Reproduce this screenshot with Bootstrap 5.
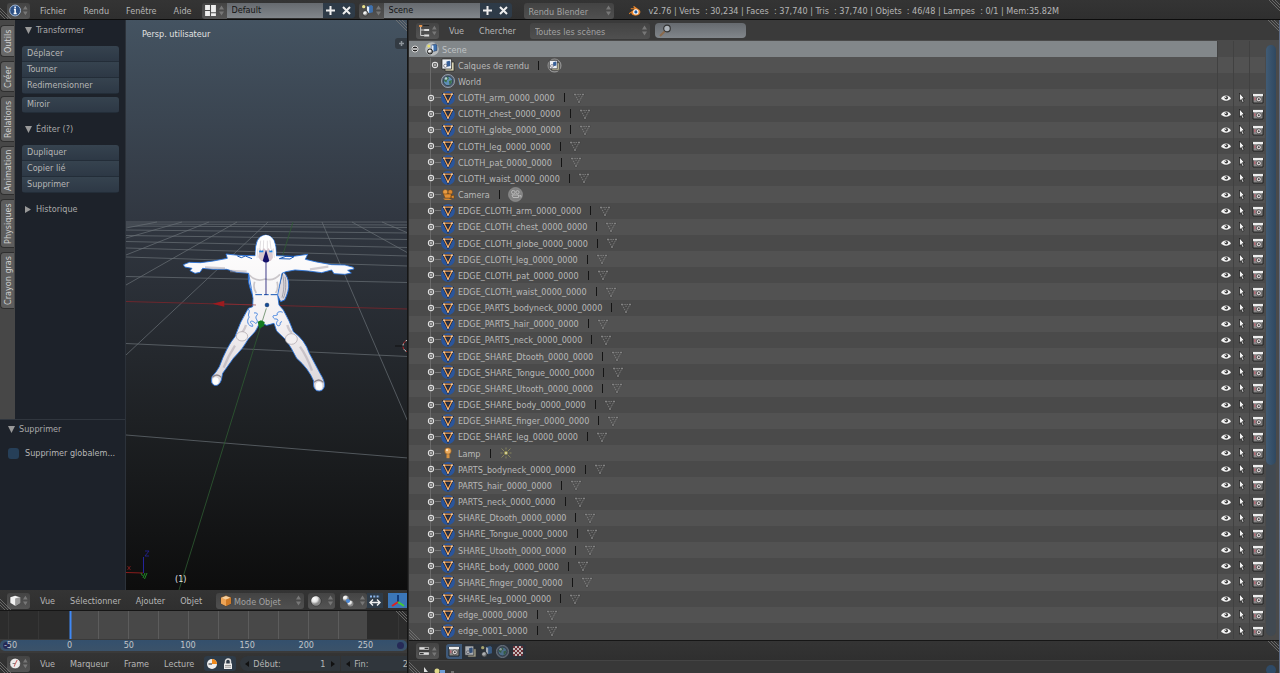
<!DOCTYPE html>
<html lang="fr">
<head>
<meta charset="utf-8">
<meta name="viewport" content="width=device-width, initial-scale=1">
<title>Blender</title>
<link href="https://cdn.jsdelivr.net/npm/bootstrap@5.3.0/dist/css/bootstrap.min.css" rel="stylesheet">
<style>
body{font-family:"DejaVu Sans Condensed","DejaVu Sans",sans-serif;font-size:9px;line-height:12px;color:#b6b6b6;background:#323232}
.app{height:100vh;min-height:600px;overflow:hidden}
.bar{height:20px;padding-top:1px;background:linear-gradient(#343434,#2f2f2f);position:relative;white-space:nowrap;overflow:hidden;flex:none}
.bar.light{background:#3a3a3a;height:21px;border-bottom:1px solid #4a4a4a}
.bar.topbar{border-bottom:1px solid #0c0c0c;padding-top:2px}
.menu-link{color:#b6b6b6;text-decoration:none;margin-right:15px}
.topbar .menu-link{margin-right:17px}
.menu-link.last{margin-right:14px}
.topbar .menu-link.last{margin-right:10px}
.split{display:grid;grid-template-columns:408fr 872fr;min-height:0}
.ed{height:16px;width:23px;padding:0 2px;border:0;border-radius:3px;background:linear-gradient(#444,#545454);display:flex;align-items:center;gap:2px;flex:none}
.ed.sm{width:25px;border-radius:3px 0 0 3px}
.ed.wide{width:27px;gap:6px}
.ed.first{margin:0 10px 0 7px}
.fld{height:15px;padding:0 5px;border:0;border-radius:0;font-size:9px;line-height:15px;color:#141414;background:linear-gradient(#666a6f,#81868b);min-width:0;flex:none}
.topbar .fld{width:96px}
.sq{width:16px;height:15px;padding:0;border:0;border-radius:0;background:#2e3b48;display:flex;align-items:center;justify-content:center;flex:none}
.sq.rt{border-radius:0 3px 3px 0}.sq.lt{border-radius:3px 0 0 3px}
.sq.tab{background:#2b3138}.sq.tab.on{background:#3f5a7a}
.drop{appearance:none;height:16px;border:0;border-radius:3px;font-size:9px;line-height:16px;padding:1px 10px 0 5px;color:#a2a2a2;flex:none;
 background:url("data:image/svg+xml,%3Csvg xmlns='http://www.w3.org/2000/svg' width='5' height='11'%3E%3Cpath d='M0 4.500l2.500-4 2.500 4zM0 6.500l2.500 4 2.500-4z' fill='%23777'/%3E%3C/svg%3E") no-repeat right 3px center,linear-gradient(#434343,#505050)}
.drop.pic{padding-left:18px}
.over{position:relative;flex:none;display:flex}
.over>svg{position:absolute;left:4px;top:1px;pointer-events:none}
.corner{position:absolute;pointer-events:none}
.tr{top:0;right:0}.bl{bottom:0;left:0}
.leftcol{min-width:0;min-height:0;border-right:1px solid #161616;overflow:hidden}
.shelf{flex:0 0 126px;background:#1d222a;border-right:1px solid #2c323a}
.tabs{width:15px;background:#474747;padding-top:5px;gap:4px}
.vtab{writing-mode:vertical-rl;transform:rotate(180deg);width:14px;padding:0;border:1px solid #2f2f2f;border-left:0;border-radius:0 4px 4px 0;background:#5d5d5d;color:#d0d0d0;font-size:9px;line-height:12px;text-align:center}
.vtab.act{background:#686868}
.shelf-in{padding:4px 6px 0 7px;gap:10px}
.ph{height:12px;display:flex;align-items:center;gap:4px;color:#a9a9a9;background:none;border:0;padding:0 0 0 3px;font-size:9px;line-height:12px}
.tool{height:16px;border:0;border-bottom:1px solid #232d38;border-radius:0;text-align:left;font-size:9px;line-height:15px;padding:0 5px;color:#b6b6b6;background:linear-gradient(#36434f,#2d3845)}
.grp{border-radius:3px;overflow:hidden}
.grp+.grp{margin-top:-7px}
.redo{height:171px;border-top:1px solid #30363e;padding:3px 8px 0 5px;flex:none}
.chk.form-check-input{width:11px;height:11px;margin:0 6px 0 3px;border:0;border-radius:3px;background:#263f58}
.view{flex:1;min-width:0;position:relative;overflow:hidden}
.view>svg{display:block;width:100%;height:100%}
.view-name{position:absolute;left:16px;top:8px;color:#e2e2e2}
.obj-name{position:absolute;left:49px;bottom:5px;color:#e2e2e2}
.plusbtn{position:absolute;right:0;top:18px;width:12px;height:11px;padding:0;border:0;border-radius:3px 0 0 3px;background:#333b43;display:flex;align-items:center;justify-content:center}
.view>svg.corner{width:12px;height:12px}
.track{height:29px;border-top:1px solid #161616;flex:none;position:relative}
.track svg.lines{display:block;width:100%;height:100%}
.scrub{height:14px;padding-top:1px;background:#3a3a3a;flex:none;overflow:hidden}
.scrub-in{height:11px;border-radius:5px;background:linear-gradient(#34506d,#3b5269);position:relative}
.ticks{display:grid;grid-template-columns:repeat(7,59fr) 12fr;margin-left:-19px;text-align:center;line-height:11px;color:#c0c4c8}
.knob{position:absolute;right:3px;top:2px;width:7px;height:7px;border-radius:50%;background:#262a57}
.knob.l{left:3px}
.num{height:15px;width:100px;display:flex;align-items:center;background:#30363c;flex:none;padding:0 5px;color:#b6b6b6}
.num input{width:100%;min-width:0;background:none;border:0;padding:0 6px 0 0;text-align:right;color:#b6b6b6;font-size:9px;line-height:12px}
.rightcol{min-width:0;min-height:0;border-left:1px solid #2a2a2a;border-right:1px solid #5d6b85}
.outl{flex:1;min-height:0;background:#4a4a4a;position:relative}
.tree{display:grid;grid-auto-rows:1fr;flex:1;min-width:0;margin:0;padding:0 0 1px;list-style:none}
.trow{display:flex;align-items:center;min-height:0;background:#4a4a4a;white-space:nowrap;color:#b8b8b8}
.trow:nth-child(even){background:#525252}
.tname{flex:1;display:flex;align-items:center;height:100%;min-width:0;padding-left:18px}
.tname>svg{flex:none;position:relative;z-index:1}
.tname.l0{padding-left:2px}.tname.l1{padding-left:22px}.tname.l2{padding-left:32px}
.lbl{padding:1px 0 0 3px}
.trow.sel .tname{background:#82878a;color:#bfc2c4}
.tog{width:16px;align-self:stretch;padding:0;border:0;border-left:1px solid #414141;background:none;display:flex;align-items:center;justify-content:center;flex:none}
.link6{width:6px;height:1px;background:#777;flex:none}
.trow.sel .link6{background:none}
.sep{width:1px;height:9px;background:#141414;margin:0 8px 0 9px;flex:none}
.trunk{position:absolute;left:21px;top:17px;bottom:0;width:1px;background:#6a6a6a;pointer-events:none}
.scroll{flex:0 0 14px;padding:4px 3px 4px 1px;background:#4a4a4a}
.scroll>div{height:100%;border-radius:5px;background:#414951}
.scroll>div>div{height:71%;border-radius:5px;background:linear-gradient(90deg,#405b75,#2f4860)}
.propbar{height:21px;border-top:1px solid #161616;border-bottom:1px solid #444}
.props{height:12px;background:#383838;flex:none;overflow:hidden;position:relative}
.dot{width:10px;height:10px;margin:4px 3px 0;background:#2f4a66}
</style>
<script src="https://cdn.jsdelivr.net/npm/bootstrap@5.3.0/dist/js/bootstrap.bundle.min.js"></script>
</head>
<body>
<svg width="0" height="0" class="position-absolute" aria-hidden="true">
 <defs>
 <radialGradient id="ball" cx=".35" cy=".3"><stop offset="0" stop-color="#fff"/><stop offset=".6" stop-color="#e4e4e4"/><stop offset="1" stop-color="#8a8a8a"/></radialGradient>
 <linearGradient id="sky" gradientUnits="userSpaceOnUse" x1="0" y1="20" x2="0" y2="590"><stop offset="0" stop-color="#445361"/><stop offset=".35" stop-color="#313741"/><stop offset=".7" stop-color="#1e2124"/><stop offset="1" stop-color="#0d0d0d"/></linearGradient>
 <linearGradient id="skin" x1="0" y1="0" x2="0" y2="1"><stop offset="0" stop-color="#fff"/><stop offset=".6" stop-color="#f2eff1"/><stop offset="1" stop-color="#d9d4d8"/></linearGradient>
 </defs>
 <symbol id="ud" viewBox="0 0 5 11"><path d="M0 4.500l2.500-4 2.500 4zM0 6.500l2.500 4 2.500-4z" fill="#777"/></symbol>
 <symbol id="hatch" viewBox="0 0 12 12"><path d="M1 0l11 11M4 0l8 8M7 0l5 5" stroke="#777" stroke-width=".8"/></symbol>
 <symbol id="hatchb" viewBox="0 0 12 12"><path d="M0 1l11 11M0 4l8 8M0 7l5 5" stroke="#777" stroke-width=".8"/></symbol>
 <symbol id="info" viewBox="0 0 12 12"><circle cx="6" cy="6" r="5.300" fill="#2c4f83" stroke="#a9c0de" stroke-width=".9"/><path d="M6 2v1.700M4.800 5h1.200v3.500M4.500 9h3" stroke="#fff" stroke-width="1.500" fill="none"/></symbol>
 <symbol id="screen" viewBox="0 0 12 12"><path d="M1 1h4.500v4.500H1zM1 6.500h4.500V11H1zM6.500 1H11v6.500H6.500zM6.500 8.500H11V11H6.500z" fill="#eee"/></symbol>
 <symbol id="scene" viewBox="0 0 12 12"><circle cx="2.500" cy="2.500" r="1.500" fill="#e8df8a"/><path d="M5.500 2l4-1L11 2v5.500L7.500 8.500 5.500 7z" fill="#3e70ad"/><path d="M5.500 2l2 .7v5.800L5.500 7z" fill="#e5eefa"/><circle cx="4" cy="8.700" r="2.500" fill="url(#ball)" stroke="#222" stroke-width=".6"/></symbol>
 <symbol id="scenec" viewBox="0 0 14 14"><circle cx="7" cy="7" r="6.800" fill="#b9bdbf"/><circle cx="3.800" cy="4" r="1.500" fill="#e8df6a"/><path d="M6.500 3l4-1L12 3v5.500L8.500 9.500 6.500 8z" fill="#3e70ad" stroke="#223" stroke-width=".4"/><path d="M6.500 3l2 .7v5.800L6.500 8z" fill="#e5eefa"/><circle cx="5" cy="9.500" r="2.500" fill="url(#ball)" stroke="#111" stroke-width=".9"/></symbol>
 <symbol id="layers" viewBox="0 0 14 14"><path d="M4 4h9v9H4z" fill="#d8d3b2" stroke="#222" stroke-width=".7"/><path d="M1 1h9.500v10H1z" fill="#eef1f5" stroke="#222" stroke-width=".7"/><path d="M5.500 3.500l3-.8.8 1V8l-3 .8-.8-1z" fill="#37609a"/><circle cx="4.300" cy="7.800" r="1.600" fill="#fff" stroke="#445" stroke-width=".6"/></symbol>
 <symbol id="layersc" viewBox="0 0 16 16"><circle cx="8" cy="8" r="7" fill="#777" stroke="#a5a5a5" stroke-width=".8"/><path d="M5 5h8v8H5z" fill="#d8d3b2" stroke="#222" stroke-width=".7"/><path d="M2.500 2.500H11v9H2.500z" fill="#eef1f5" stroke="#222" stroke-width=".7"/><path d="M6.500 4.500l3-.8.5 1V8l-3 .8-.5-1z" fill="#37609a"/><circle cx="5.300" cy="8.500" r="1.500" fill="#fff" stroke="#445" stroke-width=".6"/></symbol>
 <symbol id="world" viewBox="0 0 14 14"><circle cx="7" cy="7" r="6.600" fill="#5d6775" stroke="#a7b3c4" stroke-width=".7"/><circle cx="7" cy="7" r="4.700" fill="#5f8fb8" stroke="#1c2b3a" stroke-width=".7"/><path d="M4 4l3-1.500L8 5 6 6l-.5 2.500L3 7zM8 7l3-1-.5 3L8.500 11z" fill="#3d7146"/><circle cx="5" cy="4.500" r="1.300" fill="#dcebf5" opacity=".8"/></symbol>
 <symbol id="mesh" viewBox="0 0 14 14"><circle cx="7" cy="7" r="6.900" fill="#2a559b"/><path d="M3 3.200h8L7 11z" fill="#26334f" stroke="#1a1f2c" stroke-width="2.400"/><path d="M3 3.200h8L7 11z" fill="none" stroke="#efa35c" stroke-width="1.300"/><path d="M2.300 2.500h1.400v1.400H2.300zM10.300 2.500h1.400v1.400h-1.400zM6.300 10.200h1.400v1.400H6.300z" fill="#fbdcb8"/></symbol>
 <symbol id="vmesh" viewBox="0 0 12 12"><path d="M2 2.500h8L6 10z" fill="none" stroke="#8e8e8e" stroke-width=".7" stroke-dasharray="1.500 .8"/><path d="M1 1.500h2v2H1zM9 1.500h2v2H9zM5 9h2v2H5zM5.300 3.500h1.500V5H5.300z" fill="#979797" stroke="#333" stroke-width=".4"/></symbol>
 <symbol id="exp" viewBox="0 0 8 8"><circle cx="4" cy="4" r="2.600" fill="#111" stroke="#e2e2e2" stroke-width="1.100"/><path d="M4 2.200v3.600M2.200 4h3.600" stroke="#fff" stroke-width=".8"/></symbol>
 <symbol id="col" viewBox="0 0 8 8"><circle cx="4" cy="4" r="3" fill="#222" stroke="#ddd" stroke-width="1"/><path d="M2 4h4" stroke="#fff" stroke-width="1.300"/></symbol>
 <symbol id="cam" viewBox="0 0 14 14"><circle cx="4.300" cy="4" r="2.500" fill="#e79b43" stroke="#6b3c0b" stroke-width=".4"/><circle cx="9.300" cy="4" r="2.300" fill="#d98730" stroke="#6b3c0b" stroke-width=".4"/><path d="M2.500 6H10v4H4zM10 8l3-.8v3.300L10 9.800z" fill="#e08f36" stroke="#6b3c0b" stroke-width=".5"/><path d="M2 10.500h6l3 1.500H4z" fill="#d6862f"/></symbol>
 <symbol id="camd" viewBox="0 0 15 15"><circle cx="7.500" cy="7.500" r="7" fill="#828282" stroke="#999" stroke-width=".6"/><circle cx="5.300" cy="5.200" r="1.800" fill="none" stroke="#b8b8b8"/><circle cx="9.500" cy="5.200" r="1.600" fill="none" stroke="#b8b8b8"/><path d="M4 8h6.500v2.500H5zM11 9l2-.5v2" fill="none" stroke="#b8b8b8"/></symbol>
 <symbol id="lamp" viewBox="0 0 14 14"><circle cx="7" cy="5" r="3.300" fill="#e9a95c" stroke="#7c4a13" stroke-width=".6"/><path d="M5.500 8.200h3v4h-3z" fill="#d8923f"/><circle cx="6" cy="4" r="1.200" fill="#ffe2bb"/></symbol>
 <symbol id="lampd" viewBox="0 0 14 14"><path d="M7 1.500v2M7 10.500v2M1.500 7h2M10.500 7h2M2.500 2.500l2.500 2.500M11.500 2.500L9 5M2.500 11.500L5 9M11.500 11.500L9 9" stroke="#8d8a5e" stroke-width=".9"/><circle cx="7" cy="7" r="1.700" fill="#cfcb9a" stroke="#8b8746" stroke-width=".9"/></symbol>
 <symbol id="eye" viewBox="0 0 12 10"><path d="M.8 5.300C3 1.200 9 1.200 11.200 5.300 9 9 3 9 .8 5.300z" fill="#f4f4f4" stroke="#2a2a2a" stroke-width=".4"/><circle cx="6.300" cy="4.800" r="1.800" fill="#3a3a3a"/><circle cx="5.700" cy="4.300" r=".7" fill="#fff"/></symbol>
 <symbol id="cur" viewBox="0 0 8 12"><path d="M1.500 1l5 5.500-2 .2L6 10l-1.500.7L3.300 7.500 1.500 9z" fill="#f2f2f2" stroke="#111" stroke-width=".7"/></symbol>
 <symbol id="rend" viewBox="0 0 12 12"><path d="M1 2h10v9H1z" fill="#8a8a8a" stroke="#1c1c1c" stroke-width=".9"/><path d="M1 1.800h10v2.400H1z" fill="#eee"/><circle cx="6.800" cy="7.300" r="2.500" fill="#e4dcdd" stroke="#333" stroke-width=".7"/><circle cx="6.800" cy="7.300" r="1" fill="#444"/><path d="M2 5.200h1.500v3H2z" fill="#b56a75"/></symbol>
 <symbol id="blender" viewBox="0 0 14 12"><path d="M1 8.500L7 4H3V3h4L5.500 1.500l1-1L12.500 5c1.800 2 .8 6-4.500 6-3 0-4.500-1.500-4.500-3.300L1.500 9.500z" fill="#e8842a"/><circle cx="8.500" cy="7" r="2.900" fill="#fff"/><circle cx="8.500" cy="7" r="1.700" fill="#245c9e"/></symbol>
 <symbol id="outliner" viewBox="0 0 12 13"><path d="M1 1h3v2H1z" fill="#e9944b"/><path d="M2.500 3v8.500H6M2.500 6H6" stroke="#ccc" fill="none"/><path d="M6 5h5v2H6zM6 10.500h5v2H6z" fill="#ddd"/><path d="M5 1.500h6" stroke="#222"/></symbol>
 <symbol id="propi" viewBox="0 0 13 12"><path d="M1 1.500h11v3.500H1zM1 7h11v3.500H1z" fill="#ddd" stroke="#222" stroke-width=".6"/><path d="M7 2.500h4v1.500H7zM2 8h4v1.500H2z" fill="#333"/></symbol>
 <symbol id="cube" viewBox="0 0 12 12"><path d="M1 2.500L6 1l5 1.500v6L6 11.500 1 8.500z" fill="#f2f2f2" stroke="#222" stroke-width=".5"/><path d="M6 4l5-1.500v6l-5 3z" fill="#9a9a9a"/></symbol>
 <symbol id="cubeo" viewBox="0 0 12 12"><path d="M1 3l5-2 5 2v6l-5 2.500L1 9z" fill="#f6cf9d" stroke="#5a2f06" stroke-width=".5"/><path d="M6 5l5-2v6l-5 2.500z" fill="#cf7a26"/><path d="M1 3l5 2v6.500L1 9z" fill="#eda456"/></symbol>
 <symbol id="sphere" viewBox="0 0 12 12"><circle cx="6" cy="6" r="5.200" fill="url(#ball)" stroke="#1a1a1a" stroke-width=".5"/></symbol>
 <symbol id="pivot" viewBox="0 0 12 12"><circle cx="3.800" cy="3.500" r="3" fill="url(#ball)"/><circle cx="8.400" cy="8.500" r="3" fill="url(#ball)"/><circle cx="6" cy="6" r="2.100" fill="#4b86d1"/></symbol>
 <symbol id="clock" viewBox="0 0 12 12"><circle cx="6" cy="6" r="5.200" fill="#ececec" stroke="#222" stroke-width=".5"/><path d="M6 6.500L8 2.500M6 6.500l-1 2.500" stroke="#c66" stroke-width="1"/><path d="M6 6h-2.500" stroke="#555" stroke-width=".7"/></symbol>
</svg>

<div class="app d-flex flex-column">
 <nav class="bar topbar d-flex align-items-center" aria-label="Menu principal">
  <button class="ed first" aria-label="Type d'éditeur"><svg width="13" height="13"><use href="#info"/></svg><svg width="5" height="11"><use href="#ud"/></svg></button>
  <a class="menu-link" href="#">Fichier</a><a class="menu-link" href="#">Rendu</a><a class="menu-link" href="#">Fenêtre</a><a class="menu-link last" href="#">Aide</a>
  <button class="ed sm" aria-label="Écran"><svg width="13" height="13"><use href="#screen"/></svg><svg width="5" height="11"><use href="#ud"/></svg></button>
  <input class="fld" aria-label="Écran actif" value="Default">
  <button class="sq" aria-label="Ajouter un écran"><svg width="9" height="9"><path d="M4.500 0v9M0 4.500h9" stroke="#eee" stroke-width="2"/></svg></button>
  <button class="sq rt me-1" aria-label="Supprimer l'écran"><svg width="9" height="9"><path d="M1 1l7 7M8 1L1 8" stroke="#eee" stroke-width="2"/></svg></button>
  <button class="ed sm" aria-label="Scène"><svg width="13" height="13"><use href="#scene"/></svg><svg width="5" height="11"><use href="#ud"/></svg></button>
  <input class="fld" aria-label="Scène active" value="Scene">
  <button class="sq" aria-label="Ajouter une scène"><svg width="9" height="9"><path d="M4.500 0v9M0 4.500h9" stroke="#eee" stroke-width="2"/></svg></button>
  <button class="sq rt" aria-label="Supprimer la scène"><svg width="9" height="9"><path d="M1 1l7 7M8 1L1 8" stroke="#eee" stroke-width="2"/></svg></button>
  <select class="drop" style="width:90px;margin:0 14px 0 12px" aria-label="Moteur de rendu"><option>Rendu Blender</option></select>
  <svg width="13" height="12" class="flex-shrink-0 me-2"><use href="#blender"/></svg>
  <span style="white-space:pre">v2.76 | Verts  : 30,234 | Faces  : 37,740 | Tris  : 37,740 | Objets  : 46/48 | Lampes  : 0/1 | Mem:35.82M</span>
  <svg class="corner tr" width="12" height="12"><use href="#hatch"/></svg><svg class="corner bl" width="12" height="12"><use href="#hatchb"/></svg>
 </nav>

 <div class="split flex-grow-1">
  <div class="leftcol d-flex flex-column">
   <div class="d-flex flex-grow-1" style="min-height:0">
    <aside class="shelf d-flex flex-column">
     <div class="d-flex flex-grow-1" style="min-height:0">
      <div class="tabs d-flex flex-column" id="tabs"></div>
      <div class="shelf-in flex-grow-1 d-flex flex-column">
       <button class="ph"><svg width="7" height="7"><path d="M0 0h7L3.500 7z" fill="#999"/></svg>Transformer</button>
       <div class="grp d-flex flex-column"><button class="tool">Déplacer</button><button class="tool">Tourner</button><button class="tool">Redimensionner</button></div>
       <div class="grp d-flex flex-column"><button class="tool">Miroir</button></div>
       <button class="ph"><svg width="7" height="7"><path d="M0 0h7L3.500 7z" fill="#999"/></svg>Éditer (?)</button>
       <div class="grp d-flex flex-column"><button class="tool">Dupliquer</button><button class="tool">Copier lié</button><button class="tool">Supprimer</button></div>
       <button class="ph"><svg width="7" height="7"><path d="M0 0l6 3.500L0 7z" fill="#999"/></svg>Historique</button>
      </div>
     </div>
     <div class="redo">
      <button class="ph mb-2"><svg width="7" height="7"><path d="M0 0h7L3.500 7z" fill="#999"/></svg>Supprimer</button>
      <div class="d-flex align-items-center pt-1 text-nowrap"><input class="form-check-input chk" type="checkbox" id="glob"><label for="glob">Supprimer globalem...</label></div>
     </div>
    </aside>
    <main class="view">
     <svg viewBox="126 20 281 570" preserveAspectRatio="xMidYMid slice">
      <rect x="0" y="0" width="600" height="640" fill="url(#sky)"/>
      <g stroke="#6a7177" stroke-width=".7" fill="none">
       <path d="M126 222H408M126 224l282 1M126 226l282 1.500M126 230l282 3M126 235.500l282 4M126 241.500l282 6M126 248l282 8M126 257l282 9M126 276.500l282 6M126 343.500l282 13M126 435l282 23"/>
       <path d="M126 355L268 222M126 285L237 222M126 255L209 222M126 238L182 222M126 228L157 222M322 222L408 422M352 222L408 253M382 222L408 233"/>
      </g>
      <path d="M126 301.500L408 309" stroke="#7d262c" stroke-width=".8"/>
      <path d="M293 222L179 590" stroke="#2f5c32" stroke-width=".8"/>
      <g transform="translate(180 225) scale(.33333)" stroke-linejoin="round">
       <path d="M207 140c-6 25 2 50 13 75l8 20M310 140c20 20 22 50 4 85l-12 5-10-20" fill="#ddd8de" stroke="#1d68d4" stroke-width="3"/>
       <path d="M308 150c6 25 4 45-2 68M315 155c4 20 3 45-5 65" stroke="#85858f" stroke-width="2" fill="none"/>
       <path d="M10 119L28 112 62 113 100 108 142 100 138 87 175 91 227 92Q222 32 257 30 292 32 288 92L340 94 383 88 376 103 410 111 455 119 495 120 520 127 522 132 503 136 514 144 495 148 462 146 455 135 425 143 385 138 345 135 318 140 306 145 298 185 293 210 297 240 310 255Q330 290 340 320 375 345 388 385L420 445Q436 470 433 485 428 502 410 497 398 490 401 468 385 430 350 400 335 370 318 345L290 318 282 295 260 301 240 292Q230 320 205 342 190 370 160 400L128 445 124 465Q118 484 103 481 90 475 96 455 110 440 118 425 140 365 165 335 180 290 205 250L218 245 219 220 214 190 206 145 170 142 140 133 100 133 68 130 60 142 45 145 30 137 36 130 14 126Z" fill="url(#skin)" stroke="#2a74dc" stroke-width="2.600"/>
       <path d="M204 252c10 6-4 18 4 24-10 12-4 28 10 28 2-8-12-10-4-16 12 2 10 10 16 6 6-8-4-10-2-20 8-6 4-12-6-10M308 262c-6-4-20-2-16 8-8 4-16-2-12 8 4 8 12 0 14 8-8 8-4 18 4 16 6-4-2-10 8-12" fill="none" stroke="#2a74dc" stroke-width="2.500"/>
       <path d="M172 93l12 5 12-5 20 8M298 101l20-7 24 1-12 7zM226 209h20m6 0h14m6 0h20" fill="none" stroke="#1555b4" stroke-width="3"/>
       <path d="M208 150q20 22 48 12 24 8 44-14M224 170q-6 20 5 34M291 170q6 20-4 34" fill="none" stroke="#9c959b" stroke-width="5" opacity=".5"/>
       <path d="M198 300q-6 20-22 32M165 362q-20 30-34 66M322 300q4 16 14 24M360 365q20 28 36 72M75 127l60 3M390 133l55-8M150 138l50 2" fill="none" stroke="#aaa2a9" stroke-width="7" opacity=".5"/>
       <ellipse cx="186" cy="334" rx="17" ry="14" fill="#f3f0f1" stroke="#a7a0a6" stroke-width="2"/><ellipse cx="334" cy="342" rx="18" ry="16" fill="#f3f0f1" stroke="#a7a0a6" stroke-width="2"/>
       <path d="M97 457q14-14 27 0M402 472q14-14 28 0" fill="none" stroke="#8f888e" stroke-width="4"/><ellipse cx="107" cy="468" rx="9" ry="11" fill="#fff"/><ellipse cx="417" cy="483" rx="10" ry="12" fill="#fff"/>
       <path d="M232 68h50v26l-10 14h-28l-12-14z" fill="#d9c9cf"/>
       <path d="M236 79h14M268 79h14" stroke="#1e86ea" stroke-width="5"/>
       <path d="M226 105q0-74 32-75 32 1 30 75l-9-4-2-30-6 6-6-8-6 8-7-8-7 8-6-8-5 32z" fill="#fff"/><path d="M240 72l2-25M250 74l1-28M262 72v-25M273 72l-3-26M231 100l3-30M283 98l-3-28" stroke="#c0bcc3" stroke-width="1.500"/>
       <path d="M258 210V110" stroke="#1b1773" stroke-width="2.500"/><path d="M258 74l-10 34q10 9 20 0z" fill="#141069"/>
       <circle cx="261" cy="240" r="6" fill="#124a96" stroke="#071c3c"/>
       <path d="M259 250l-12 38" stroke="#41703f" stroke-width="2"/><path d="M233 290l10-4 11 5-2 12-14 8z" fill="#137a1f"/>
       <path d="M97 236l36-9v18z" fill="#9d1b1f"/><path d="M133 237l95 3" stroke="#8f3238" stroke-width="2"/>
      </g>
      <circle cx="409" cy="346" r="6" fill="none" stroke="#ddd" stroke-dasharray="3 3"/><circle cx="409" cy="346" r="6" fill="none" stroke="#b22" stroke-dasharray="3 3" stroke-dashoffset="3"/><path d="M395 346h9" stroke="#111"/>
      <path d="M126 572.500l17 .5" stroke="#8a1d1d"/><path d="M143.500 573v-16" stroke="#24249a"/><path d="M127.500 566l3 4m0-4l-3 4" stroke="#8a1d1d" stroke-width=".8"/><path d="M145 551h4l-4 5h4" stroke="#24249a" stroke-width=".8" fill="none"/><path d="M141 573l1.500 3M147 573l-2.500 6M143 578l2-5" stroke="#1f8a25" fill="none"/>
     </svg>
     <span class="view-name">Persp. utilisateur</span><span class="obj-name">(1)</span>
     <button class="plusbtn" aria-label="Ouvrir le panneau"><svg width="5" height="5"><path d="M2.500 0v5M0 2.500h5" stroke="#8d949a" stroke-width="1.500"/></svg></button>
     <svg class="corner tr"><use href="#hatch"/></svg>
    </main>
   </div>

   <div class="bar d-flex align-items-center">
    <button class="ed first" aria-label="Vue 3D"><svg width="13" height="13"><use href="#cube"/></svg><svg width="5" height="11"><use href="#ud"/></svg></button>
    <a class="menu-link" href="#">Vue</a><a class="menu-link" href="#">Sélectionner</a><a class="menu-link" href="#">Ajouter</a><a class="menu-link last" href="#">Objet</a>
    <div class="over me-1"><svg width="12" height="13"><use href="#cubeo"/></svg><select class="drop pic" style="width:88px" aria-label="Mode"><option>Mode Objet</option></select></div>
    <button class="ed wide" style="margin-right:5px" aria-label="Ombrage"><svg width="12" height="12"><use href="#sphere"/></svg><svg width="5" height="11"><use href="#ud"/></svg></button>
    <button class="ed wide" aria-label="Pivot"><svg width="12" height="12"><use href="#pivot"/></svg><svg width="5" height="11"><use href="#ud"/></svg></button>
    <button class="sq" style="margin-right:5px" aria-label="Centres"><svg width="12" height="12"><path d="M1 1.500h10" stroke="#8ab4e8" stroke-width="2" stroke-dasharray="2 1.300"/><path d="M1 7.500h10M4 4.500l-3 3 3 3M8 4.500l3 3-3 3" stroke="#eee" stroke-width="1.400" fill="none"/></svg></button>
    <button class="sq" style="background:#3b76b8;width:20px" aria-label="Manipulateur"><svg width="14" height="14"><path d="M7 8V1" stroke="#123a7a" stroke-width="2"/><path d="M7 8l-6 4" stroke="#d22" stroke-width="2"/><path d="M7 8l6 4" stroke="#4c3" stroke-width="2"/></svg></button>
    <svg class="corner bl" width="12" height="12"><use href="#hatchb"/></svg>
   </div>
   <div class="track">
    <svg class="lines" viewBox="0 0 407 28" preserveAspectRatio="none"><path d="M0 0h408v28H0z" fill="#2c2c2c"/><path d="M70 0h297v28H70z" fill="#484848"/><path d="M8.500 0v28M38.500 0v28M398.500 0v28" stroke="#363636"/><path d="M98.500 0v28M128.500 0v28M158.500 0v28M188.500 0v28M218.500 0v28M248.500 0v28M278.500 0v28M308.500 0v28M338.500 0v28" stroke="#5c5c5c"/><path d="M70.500 0v28" stroke="#3f88f5" stroke-width="2"/></svg>
    <svg class="corner tr" width="12" height="12"><use href="#hatch"/></svg>
   </div>
   <div class="scrub"><div class="scrub-in"><span class="knob l"></span><span class="knob"></span><div class="ticks position-relative"><span>-50</span><span>0</span><span>50</span><span>100</span><span>150</span><span>200</span><span>250</span></div></div></div>
   <div class="bar d-flex align-items-center">
    <button class="ed first" aria-label="Ligne de temps"><svg width="13" height="13"><use href="#clock"/></svg><svg width="5" height="11"><use href="#ud"/></svg></button>
    <a class="menu-link" href="#">Vue</a><a class="menu-link" href="#">Marqueur</a><a class="menu-link" href="#">Frame</a><a class="menu-link" href="#" style="margin-right:10px">Lecture</a>
    <button class="sq lt" aria-label="Plage de prévisualisation"><svg width="12" height="12"><circle cx="6" cy="6" r="5" fill="#eee"/><path d="M6 6V1a5 5 0 0 1 5 5z" fill="#f08a1c"/><path d="M6 6H2.500" stroke="#222"/></svg></button>
    <button class="sq rt me-1" aria-label="Verrouiller"><svg width="10" height="12"><path d="M2.500 6V3.500a2.500 2.500 0 0 1 5 0V6" fill="none" stroke="#ddd" stroke-width="1.500"/><path d="M1 5.500h8V11H1z" fill="#eee"/><path d="M2 7.500h6M2 9.200h6" stroke="#888" stroke-width=".8"/></svg></button>
    <div class="num rounded-start-3"><svg width="4" height="6" class="flex-shrink-0 me-1"><path d="M4 0v6L0 3z" fill="#111"/></svg><label for="deb">Début:</label><input id="deb" value="1"><svg width="4" height="6" class="flex-shrink-0"><path d="M0 0v6l4-3z" fill="#111"/></svg></div>
    <div class="num" style="margin-left:1px"><svg width="4" height="6" class="flex-shrink-0 me-1"><path d="M4 0v6L0 3z" fill="#111"/></svg><label for="fin">Fin:</label><input id="fin" value="250" style="padding-right:18px"></div>
    <svg class="corner bl" width="12" height="12"><use href="#hatchb"/></svg>
   </div>
  </div>

  <div class="rightcol d-flex flex-column">
   <div class="bar light d-flex align-items-center">
    <button class="ed first" aria-label="Outliner"><svg width="13" height="13"><use href="#outliner"/></svg><svg width="5" height="11"><use href="#ud"/></svg></button>
    <a class="menu-link" href="#">Vue</a><a class="menu-link last" href="#">Chercher</a>
    <select class="drop" style="width:120px;margin-right:5px" aria-label="Affichage"><option>Toutes les scènes</option></select>
    <div class="over"><svg width="13" height="13"><path d="M1 12l5-5" stroke="#8a6a4c" stroke-width="2"/><circle cx="8" cy="4.500" r="3.300" fill="#aeb4ba" stroke="#333" stroke-width="1.200"/></svg><input class="fld rounded-1" style="width:91px;padding-left:20px" aria-label="Filtrer"></div>
    <svg class="corner tr" width="12" height="12"><use href="#hatch"/></svg>
   </div>
   <div class="outl d-flex">
    <ul class="tree" id="scene-tree"></ul>
    <div class="trunk"></div>
    <div class="scroll"><div><div></div></div></div>
    <svg class="corner bl" width="12" height="12"><use href="#hatchb"/></svg>
   </div>
   <div class="bar propbar d-flex align-items-center">
    <button class="ed" style="margin:0 7px" aria-label="Propriétés"><svg width="13" height="12"><use href="#propi"/></svg><svg width="5" height="11"><use href="#ud"/></svg></button>
    <button class="sq lt tab on" aria-label="Rendu"><svg width="12" height="12"><use href="#rend"/></svg></button>
    <button class="sq tab" aria-label="Calques"><svg width="13" height="13" opacity=".65"><use href="#layers"/></svg></button>
    <button class="sq tab" aria-label="Scène"><svg width="13" height="13" opacity=".65"><use href="#scene"/></svg></button>
    <button class="sq tab" aria-label="Monde"><svg width="13" height="13" opacity=".65"><use href="#world"/></svg></button>
    <button class="sq rt tab" aria-label="Texture"><svg width="10" height="10"><path d="M0 0h10v10H0z" fill="#c4babb"/><path d="M0 0h2v2H0zM4 0h2v2H4zM8 0h2v2H8zM2 2h2v2H2zM6 2h2v2H6zM0 4h2v2H0zM4 4h2v2H4zM8 4h2v2H8zM2 6h2v2H2zM6 6h2v2H6zM0 8h2v2H0zM4 8h2v2H4zM8 8h2v2H8z" fill="#6d2f35"/></svg></button>
    <svg class="corner tr" width="12" height="12"><use href="#hatch"/></svg>
   </div>
   <div class="props d-flex"><svg width="60" height="12"><path d="M15 6l4 5h-4z" fill="#ddd"/><circle cx="28" cy="10" r="2.500" fill="#e0d88a"/><path d="M31 9h5v3h-5z" fill="#6d9bd4"/><path d="M42 11h3" stroke="#aaa"/></svg><span class="dot ms-auto rounded-circle"></span>
    <svg class="corner bl" width="12" height="12"><use href="#hatchb"/></svg>
   </div>
  </div>
 </div>
</div>
<script>
const ic=(id,w,h)=>`<svg width="${w}" height="${h||w}" aria-hidden="true"><use href="#${id}"/></svg>`;
document.getElementById('tabs').innerHTML=[['Outils',32],['Créer',31],['Relations',46],['Animation',49],['Physiques',49],['Crayon gras',57]]
 .map(([t,h],i)=>`<button class="vtab${i?'':' act'}" style="height:${h}px">${t}</button>`).join('');
const cloth=p=>['arm','chest','globe','leg','pat','waist'].map(n=>p+n);
const parts=p=>['bodyneck','hair','neck'].map(n=>p+n);
const share=p=>['Dtooth','Tongue','Utooth','body','finger','leg'].map(n=>p+n);
const names=[...cloth('CLOTH_'),'Camera',...cloth('EDGE_CLOTH_'),...parts('EDGE_PARTS_'),...share('EDGE_SHARE_'),'Lamp',...parts('PARTS_'),...share('SHARE_'),'edge_0000','edge_0001'];
const togs=`<button class="tog" aria-label="Visible">${ic('eye',12,10)}</button><button class="tog" aria-label="Sélectionnable">${ic('cur',8,12)}</button><button class="tog" aria-label="Rendu">${ic('rend',12)}</button>`;
const none='<span class="tog"></span>'.repeat(3);
let rows=`<li class="trow sel"><div class="tname l0">${ic('col',8)}<i class="link6"></i>${ic('scenec',14)}<span class="lbl">Scene</span></div>${none}</li>
<li class="trow"><div class="tname l1">${ic('exp',8)}<span style="width:2px"></span>${ic('layers',14)}<span class="lbl">Calques de rendu</span><i class="sep"></i>${ic('layersc',15)}</div>${none}</li>
<li class="trow"><div class="tname l2">${ic('world',14)}<span class="lbl">World</span></div>${none}</li>`;
for(const n of names){
 const cam=n==='Camera',lamp=n==='Lamp';
 const label=cam||lamp?n:n+'_0000'.repeat(n.startsWith('edge')?1:2);
 rows+=`<li class="trow"><div class="tname">${ic('exp',8)}<i class="link6"></i>${ic(cam?'cam':lamp?'lamp':'mesh',14)}<span class="lbl">${label}</span><i class="sep"></i>${cam?ic('camd',15):lamp?ic('lampd',14):ic('vmesh',12)}</div>${togs}</li>`;
}
document.getElementById('scene-tree').innerHTML=rows;
</script>
</body>
</html>
